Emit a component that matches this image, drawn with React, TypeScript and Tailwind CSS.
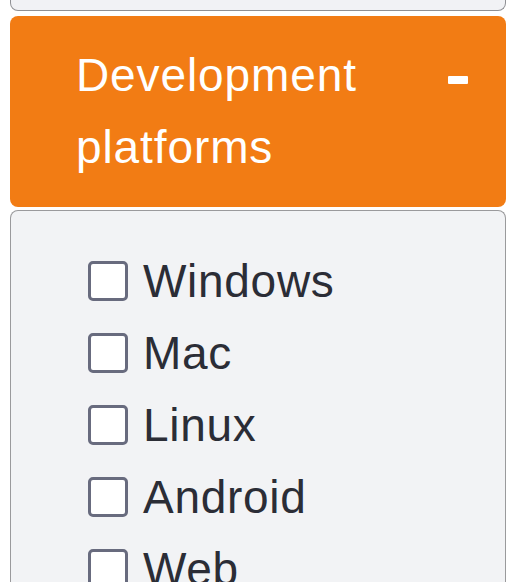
const platforms = ["Windows", "Mac", "Linux", "Android", "Web"];

export default function App() {
  return (
    <div
      className="h-[582px] w-[526px] overflow-hidden bg-white px-[10px] pr-[20px]"
      style={{ fontFamily: '"Liberation Sans", Arial, sans-serif' }}
    >
      {/* bottom edge of the previous section */}
      <div className="h-[11px] rounded-b-lg border border-t-0 border-[#8f9094] bg-[#f1f2f5]" />

      <div className="mt-[5px] flex items-start justify-between rounded-lg bg-[#f27c14] pb-[24px] pl-[66px] pr-[38px] pt-[23px]">
        <h2 className="w-[320px] text-[46px] font-normal leading-[72px] tracking-[0.9px] text-white">
          Development platforms
        </h2>
        <span className="mt-[37px] block h-[8px] w-[20px] rounded-[1px] bg-white" />
      </div>

      <div className="mt-[3px] h-[400px] rounded-t-lg border border-b-0 border-[#9a9a9c] bg-[#f2f3f5] pl-[77px] pt-[34px]">
        <ul className="flex flex-col">
          {platforms.map((p) => (
            <li key={p} className="flex h-[72px] items-center gap-[15px]">
              <span className="block h-[40px] w-[40px] shrink-0 rounded-[5px] border-[3.5px] border-[#686b7e] bg-white" />
              <span className="text-[46px] leading-none tracking-[0.7px] text-[#2b2d36]">{p}</span>
            </li>
          ))}
        </ul>
      </div>
    </div>
  );
}
